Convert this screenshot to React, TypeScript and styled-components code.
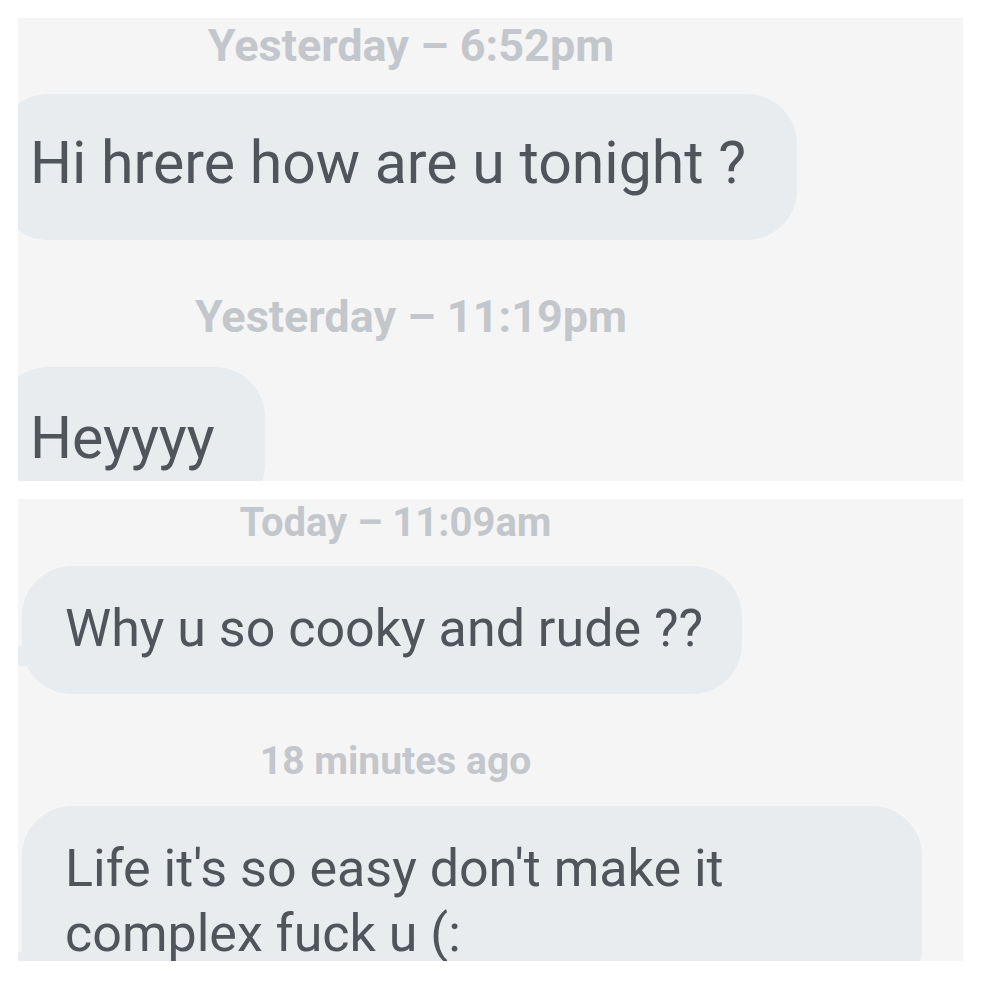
import styled, { createGlobalStyle } from "styled-components";

const GlobalStyle = createGlobalStyle`
  html, body {
    margin: 0;
    padding: 0;
    background: #ffffff;
  }
  body {
    font-family: Roboto, "Liberation Sans", Arial, sans-serif;
  }
`;

const Page = styled.div`
  width: 981px;
  height: 981px;
  box-sizing: border-box;
  padding: 18px;
  display: flex;
  flex-direction: column;
  gap: 18px;
  background: #ffffff;
`;

const Panel = styled.div<{ $h: number }>`
  height: ${(p) => p.$h}px;
  background: #f5f5f5;
  overflow: hidden;
  display: flex;
  flex-direction: column;
  align-items: flex-start;
`;

const Stamp = styled.div<{ $size: number; $lh: number; $top: number; $w: number }>`
  width: ${(p) => p.$w}px;
  margin-top: ${(p) => p.$top}px;
  text-align: center;
  font-weight: 700;
  font-size: ${(p) => p.$size}px;
  line-height: ${(p) => p.$lh}px;
  color: #c3c7cc;
  white-space: nowrap;
`;

const Bubble = styled.div<{
  $w: number;
  $top: number;
  $left: number;
  $pad: string;
  $size: number;
  $lh: number;
  $tail?: boolean;
  $wrap?: boolean;
}>`
  position: relative;
  flex-shrink: 0;
  box-sizing: border-box;
  width: ${(p) => p.$w}px;
  margin-top: ${(p) => p.$top}px;
  margin-left: ${(p) => p.$left}px;
  padding: ${(p) => p.$pad};
  background: #e8ecef;
  border-radius: 50px;
  color: #50555c;
  font-size: ${(p) => p.$size}px;
  line-height: ${(p) => p.$lh}px;
  white-space: ${(p) => (p.$wrap ? "normal" : "nowrap")};

  &::before {
    content: "";
    display: ${(p) => (p.$tail ? "block" : "none")};
    position: absolute;
    left: -4px;
    bottom: 28px;
    width: 14px;
    height: 20px;
    background: #e8ecef;
    border-radius: 3px 0 0 3px;
  }
`;

const App = () => {
  return (
    <>
      <GlobalStyle />
      <Page>
        <Panel $h={463}>
          <Stamp $size={45} $lh={53} $top={1} $w={786}>
            Yesterday – 6:52pm
          </Stamp>
          <Bubble $w={799} $top={22} $left={-20} $pad="34px 20px 43px 32px" $size={59} $lh={69}>
            Hi hrere how are u tonight ?
          </Bubble>
          <Stamp $size={45} $lh={53} $top={50} $w={786}>
            Yesterday – 11:19pm
          </Stamp>
          <Bubble $w={267} $top={24} $left={-20} $pad="36px 20px 43px 32px" $size={59} $lh={69}>
            Heyyyy
          </Bubble>
        </Panel>
        <Panel $h={462}>
          <Stamp $size={40} $lh={47} $top={0} $w={755}>
            Today – 11:09am
          </Stamp>
          <Bubble $w={720} $top={20} $left={4} $pad="32px 20px 35px 43px" $size={52} $lh={61} $tail>
            Why u so cooky and rude ??
          </Bubble>
          <Stamp $size={39} $lh={40} $top={47} $w={755}>
            18 minutes ago
          </Stamp>
          <Bubble $w={900} $top={25} $left={4} $pad="30px 43px 34px 43px" $size={52} $lh={65} $tail $wrap>
            Life it's so easy don't make it complex fuck u (:
          </Bubble>
        </Panel>
      </Page>
    </>
  );
};

export default App;
